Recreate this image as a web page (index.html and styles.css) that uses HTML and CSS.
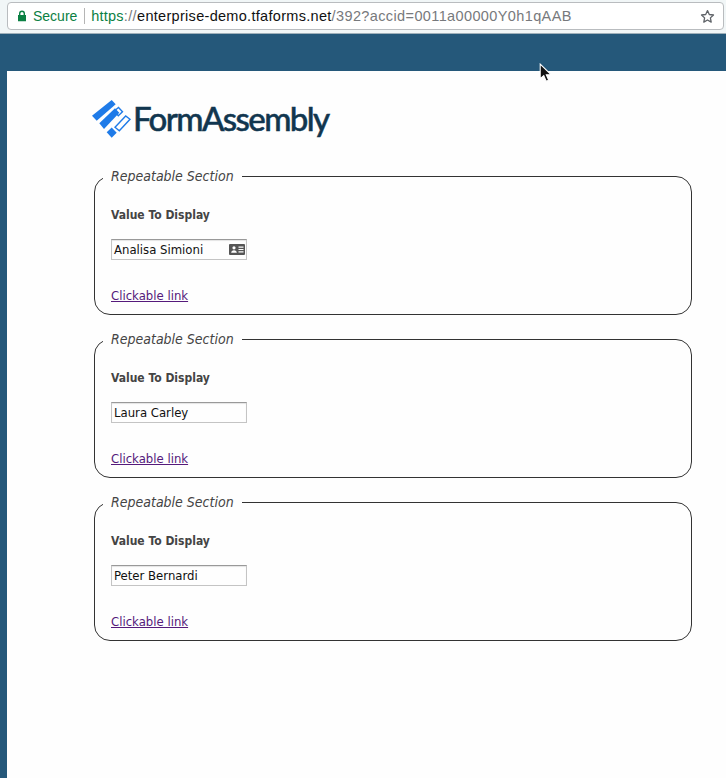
FILE: index.html
```html
<!DOCTYPE html>
<html lang="en">
<head>
<meta charset="utf-8">
<title>FormAssembly</title>
<link rel="stylesheet" href="styles.css">
</head>
<body>
<header class="chrome">
  <div class="omnibox">
    <svg class="lock" width="10" height="12" viewBox="0 0 10 12"><path d="M2 5V3.6a3 3 0 0 1 6 0V5h1v6.2H1V5zM3.4 5h3.2V3.6a1.6 1.6 0 0 0-3.2 0z" fill="#0b8043"/></svg>
    <span class="secure">Secure</span>
    <span class="divider"></span>
    <span class="url"><span class="https">https</span><span class="dim">://</span><span class="host">enterprise-demo.tfaforms.net</span><span class="dim">/392?accid=0011a00000Y0h1qAAB</span></span>
    <svg class="star" width="15" height="15" viewBox="0 0 15 15"><path d="M7.5 1.6l1.8 3.9 4.2.5-3.1 2.9.8 4.2-3.7-2.1-3.7 2.1.8-4.2L1.5 6l4.2-.5z" fill="none" stroke="#5f6368" stroke-width="1.3" stroke-linejoin="round"/></svg>
  </div>
</header>
<div class="page">
  <main class="card">
    <div class="logo">
      <svg class="mark" width="40" height="38" viewBox="0 0 40 38">
        <path d="M0 15.800L19.700 0l4 4.300L4.700 20.700z" fill="#1f7be8"/>
        <path d="M7.300 23.300L23 8.300l4.300 4.400L12 29z" fill="#1f7be8"/>
        <path d="M14.700 32.300l5-4.800 5 5.200-5 5z" fill="#1f7be8"/>
        <path d="M22.300 11l4.200-3.500 4 4.200-4.200 4z" fill="none" stroke="#1f7be8" stroke-width="1.400"/>
        <path d="M23 27.300L33.700 16l4.300 3.300-10.700 11.400z" fill="none" stroke="#1f7be8" stroke-width="1.400"/>
      </svg>
      <span class="wordmark">FormAssembly</span>
    </div>
    <fieldset class="section">
      <legend class="section-title">Repeatable Section</legend>
      <label class="field-label">Value To Display</label>
      <div class="input-box">
        <span>Analisa Simioni</span>
        <svg class="contact" width="16" height="11" viewBox="0 0 16 11"><path fill-rule="evenodd" d="M1 0h14a1 1 0 0 1 1 1v9a1 1 0 0 1-1 1H1a1 1 0 0 1-1-1V1a1 1 0 0 1 1-1zM5 2.2a1.6 1.6 0 1 0 0 3.2 1.6 1.6 0 0 0 0-3.2zM2.2 8.8h5.6c0-1.6-1.2-2.6-2.8-2.6S2.200 7.200 2.200 8.800zM9.500 2.500v1.200h5V2.500zM9.500 4.900v1.200h5V4.900zM9.500 7.300v1.200h5V7.300z" fill="#555"/></svg>
      </div>
      <a class="link" href="#">Clickable link</a>
    </fieldset>
    <fieldset class="section">
      <legend class="section-title">Repeatable Section</legend>
      <label class="field-label">Value To Display</label>
      <div class="input-box"><span>Laura Carley</span></div>
      <a class="link" href="#">Clickable link</a>
    </fieldset>
    <fieldset class="section">
      <legend class="section-title">Repeatable Section</legend>
      <label class="field-label">Value To Display</label>
      <div class="input-box"><span>Peter Bernardi</span></div>
      <a class="link" href="#">Clickable link</a>
    </fieldset>
  </main>
  <svg class="cursor" width="15" height="21" viewBox="0 0 14 20"><path d="M1 1v14l3.400-3 2.300 5.400 2.400-1-2.300-5.200h4.700z" fill="#111" stroke="#fff" stroke-width="1"/></svg>
</div>
</body>
</html>
```
FILE: styles.css
```css
* { box-sizing: border-box; }
html, body { margin: 0; height: 100%; }
body { width: 726px; height: 778px; overflow: hidden; background: #fefefe; font-family: "DejaVu Sans Condensed", "DejaVu Sans", sans-serif; }
.chrome { height: 34px; padding: 2px 2px 0 7px; background: #f1f6f7; border-bottom: 1px solid #9fb0ba; }
.omnibox { height: 28px; display: flex; align-items: center; padding: 0 8px 0 9px; background: #fff; border: 1px solid #b9bcbf; border-radius: 4px; font-family: "Liberation Sans", sans-serif; font-size: 14px; }
.lock { flex: none; margin-right: 6px; }
.secure { color: #0b8043; }
.divider { width: 1px; height: 16px; margin: 0 6px 0 7px; background: #b5b5b5; }
.url { flex: 1; white-space: nowrap; font-size: 14.500px; }
.https { color: #0b8043; letter-spacing: .2px; }
.dim { color: #77797c; letter-spacing: .38px; }
.host { color: #111; letter-spacing: .3px; }
.star { flex: none; }
.page { position: relative; height: 744px; padding: 37px 0 0 7px; background: #25587a; }
.card { height: 707px; padding: 29px 34px 0 87px; background: #fefefe; }
.logo { display: flex; align-items: center; gap: 1px; height: 38px; margin-left: -2px; margin-bottom: 30px; }
.mark { flex: none; }
.wordmark { font-family: "Lato", sans-serif; font-size: 33px; font-weight: 500; letter-spacing: -1.600px; color: #11364f; line-height: 38px; -webkit-text-stroke: 0.500px #11364f; position: relative; top: -1px; }
.section { display: flex; flex-direction: column; align-items: flex-start; height: 147px; margin: 0 0 16px; padding: 24px 16px 0; border: 1px solid #333; border-radius: 16px; min-width: 0; }
.section-title { padding: 0 8px; margin-left: -8px; font-size: 14px; font-style: italic; color: #444; }
.field-label { font-size: 12px; font-weight: 700; color: #444; line-height: 14px; }
.input-box { display: flex; align-items: center; justify-content: space-between; width: 136px; height: 21px; margin-top: 17px; padding: 0 1px 0 2px; border: 1px solid #c4c4c4; border-top-color: #999; box-shadow: inset 0 1px 1px #e4e4e4; font-size: 13px; color: #111; }
.contact { flex: none; }
.link { margin-top: 29px; font-size: 13px; color: #551a7b; line-height: 14px; }
.cursor { position: absolute; left: 539px; top: 29px; }
```
